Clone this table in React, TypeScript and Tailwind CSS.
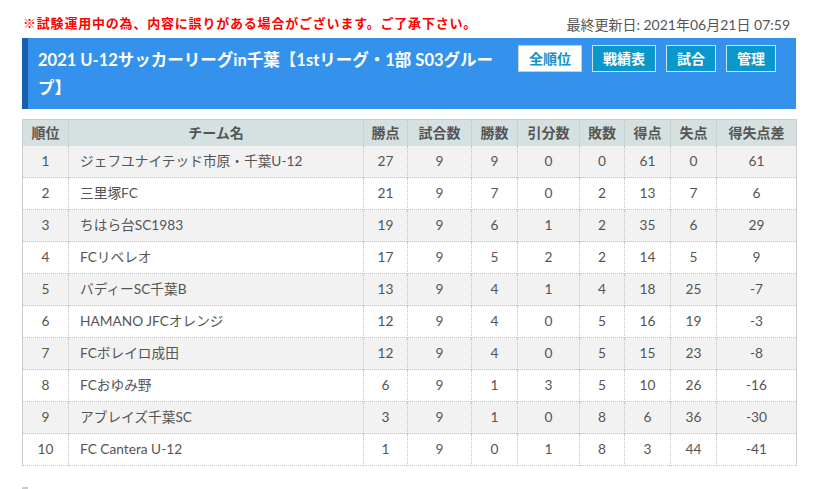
import React from "react";

type Row = {
  rank: number;
  team: string;
  pts: number;
  played: number;
  win: number;
  draw: number;
  lose: number;
  gf: number;
  ga: number;
  diff: number;
};

const rows: Row[] = [
  { rank: 1, team: "ジェフユナイテッド市原・千葉U-12", pts: 27, played: 9, win: 9, draw: 0, lose: 0, gf: 61, ga: 0, diff: 61 },
  { rank: 2, team: "三里塚FC", pts: 21, played: 9, win: 7, draw: 0, lose: 2, gf: 13, ga: 7, diff: 6 },
  { rank: 3, team: "ちはら台SC1983", pts: 19, played: 9, win: 6, draw: 1, lose: 2, gf: 35, ga: 6, diff: 29 },
  { rank: 4, team: "FCリベレオ", pts: 17, played: 9, win: 5, draw: 2, lose: 2, gf: 14, ga: 5, diff: 9 },
  { rank: 5, team: "バディーSC千葉B", pts: 13, played: 9, win: 4, draw: 1, lose: 4, gf: 18, ga: 25, diff: -7 },
  { rank: 6, team: "HAMANO JFCオレンジ", pts: 12, played: 9, win: 4, draw: 0, lose: 5, gf: 16, ga: 19, diff: -3 },
  { rank: 7, team: "FCボレイロ成田", pts: 12, played: 9, win: 4, draw: 0, lose: 5, gf: 15, ga: 23, diff: -8 },
  { rank: 8, team: "FCおゆみ野", pts: 6, played: 9, win: 1, draw: 3, lose: 5, gf: 10, ga: 26, diff: -16 },
  { rank: 9, team: "アブレイズ千葉SC", pts: 3, played: 9, win: 1, draw: 0, lose: 8, gf: 6, ga: 36, diff: -30 },
  { rank: 10, team: "FC Cantera U-12", pts: 1, played: 9, win: 0, draw: 1, lose: 8, gf: 3, ga: 44, diff: -41 },
];

const headers = [
  { label: "順位", w: "w-[46px]" },
  { label: "チーム名", w: "w-[295px]" },
  { label: "勝点", w: "w-[44px]" },
  { label: "試合数", w: "w-[64px]" },
  { label: "勝数", w: "w-[46px]" },
  { label: "引分数", w: "w-[62px]" },
  { label: "敗数", w: "w-[45px]" },
  { label: "得点", w: "w-[46px]" },
  { label: "失点", w: "w-[46px]" },
  { label: "得失点差", w: "w-[80px]" },
];

const cell = "border-l border-dotted border-[#c4c4c4] first:border-l-0 h-[32px] text-center";

export default function App() {
  return (
    <div
      className="w-[814px] h-[489px] overflow-hidden bg-white text-[#555]"
      style={{ fontFamily: 'Lato, "Noto Sans CJK JP", sans-serif' }}
    >
      <div className="ml-[22px] w-[774px] pt-[14px]">
        <div className="flex items-center justify-between h-[20px] pl-[1px] pr-[6px]">
          <p className="text-[13px] font-bold text-[#f00] tracking-[0.8px]">
            ※試験運用中の為、内容に誤りがある場合がございます。ご了承下さい。
          </p>
          <p className="text-[14px] text-[#555]">最終更新日: 2021年06月21日 07:59</p>
        </div>

        <div className="mt-[4px] flex items-start justify-between bg-[#3592ec] border-l-[6px] border-[#1760b0] pl-[10px] pr-[20px] pt-[8px] pb-[7px]">
          <h1 className="w-[462px] text-[16.5px] font-bold leading-[28px] text-white">
            2021 U-12サッカーリーグin千葉【1stリーグ・1部 S03グループ】
          </h1>
          <div className="mt-[-1px] flex gap-[10px] text-[14px] font-bold">
            <button className="w-[64px] h-[27px] bg-white border border-[#ccc] text-[#1191c9]">全順位</button>
            <button className="w-[64px] h-[27px] bg-[#0a97cb] border border-[#c9e4f4] text-white">戦績表</button>
            <button className="w-[50px] h-[27px] bg-[#0a97cb] border border-[#c9e4f4] text-white">試合</button>
            <button className="w-[50px] h-[27px] bg-[#0a97cb] border border-[#c9e4f4] text-white">管理</button>
          </div>
        </div>

        <table className="mt-[10px] w-[774px] table-fixed border-collapse border-x border-t border-[#ccc] text-[13.7px]">
          <thead>
            <tr className="bg-[#d5e0e0]">
              {headers.map((h) => (
                <th
                  key={h.label}
                  className={`${h.w} h-[26px] border-l border-dotted border-[#c4c4c4] first:border-l-0 text-[14px] font-bold text-[#555] text-center`}
                >
                  {h.label}
                </th>
              ))}
            </tr>
          </thead>
          <tbody>
            {rows.map((r, i) => (
              <tr
                key={r.rank}
                className={`border-b border-dotted border-[#c4c4c4] ${i % 2 === 0 ? "bg-[#f2f2f2]" : "bg-white"}`}
              >
                <td className={cell}>{r.rank}</td>
                <td className={`${cell} !text-left pl-[11px]`}>{r.team}</td>
                <td className={cell}>{r.pts}</td>
                <td className={cell}>{r.played}</td>
                <td className={cell}>{r.win}</td>
                <td className={cell}>{r.draw}</td>
                <td className={cell}>{r.lose}</td>
                <td className={cell}>{r.gf}</td>
                <td className={cell}>{r.ga}</td>
                <td className={cell}>{r.diff}</td>
              </tr>
            ))}
          </tbody>
        </table>

        <div className="mt-[21px] w-[6px] h-[4px] bg-[#ccc]" />
      </div>
    </div>
  );
}
